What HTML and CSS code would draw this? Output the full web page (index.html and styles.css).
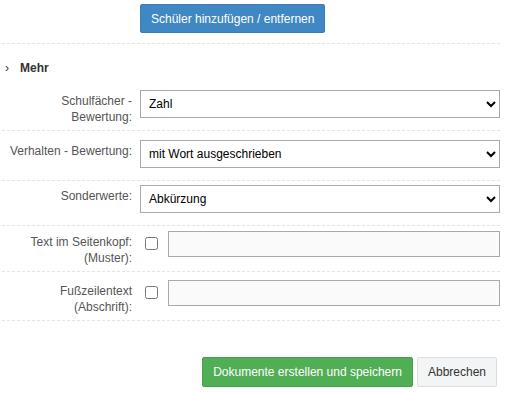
FILE: index.html
```html
<html>
    <head>
        <title>Dokumente</title>
        <link rel="stylesheet" href="styles.css">
    </head>
    <body>
        <div class="page">
            <div class="row top-row">
                <div class="label"></div>
                <div class="control">
                    <button class="btn btn-primary">Schüler hinzufügen / entfernen</button>
                </div>
            </div>

            <div class="more"><span class="chev">&rsaquo;</span>Mehr</div>

            <div class="row first">
                <div class="label">Schulfächer -<br>Bewertung:</div>
                <div class="control">
                    <select class="sel">
                        <option>Zahl</option>
                    </select>
                </div>
            </div>

            <div class="row pad-9">
                <div class="label">Verhalten - Bewertung:</div>
                <div class="control">
                    <select class="sel">
                        <option>mit Wort ausgeschrieben</option>
                    </select>
                </div>
            </div>

            <div class="row pad-4">
                <div class="label">Sonderwerte:</div>
                <div class="control">
                    <select class="sel">
                        <option>Abkürzung</option>
                    </select>
                </div>
            </div>

            <div class="row pad-5">
                <div class="label">Text im Seitenkopf:<br>(Muster):</div>
                <div class="control">
                    <input type="checkbox" class="chk">
                    <input type="text" class="txt" disabled>
                </div>
            </div>

            <div class="row pad-8">
                <div class="label">Fußzeilentext<br>(Abschrift):</div>
                <div class="control">
                    <input type="checkbox" class="chk">
                    <input type="text" class="txt" disabled>
                </div>
            </div>

            <div class="actions">
                <button class="btn btn-success">Dokumente erstellen und speichern</button>
                <button class="btn btn-default">Abbrechen</button>
            </div>
        </div>
    </body>
</html>
```

FILE: styles.css
```css
body {
    margin: 0;
    font-family: "Liberation Sans", Arial, sans-serif;
    font-size: 12px;
    color: #333;
    background: #fff;
}

.page {
    width: 498px;
    padding: 0 5px 0 2px;
}

.row {
    display: flex;
    align-items: flex-start;
    border-bottom: 1px dashed #e4e4e4;
    padding: 9px 0 5px 0;
}

.row.top-row {
    padding: 4px 0 10px 0;
}

.row.first {
    padding-top: 0;
}

.row.pad-9 {
    padding-top: 9px;
}

.row.pad-4 {
    padding-top: 4px;
}

.row.pad-5 {
    padding-top: 5px;
}

.row.pad-8 {
    padding-top: 8px;
}

.label {
    width: 130px;
    flex: none;
    text-align: right;
    color: #555;
    line-height: 16px;
    padding-top: 3px;
}

.control {
    flex: 1;
    display: flex;
    align-items: flex-start;
    margin-left: 8px;
    padding-bottom: 7px;
}

.top-row .control {
    padding-bottom: 0;
}

.more {
    font-weight: bold;
    padding: 16px 0 14px 3px;
    line-height: 16px;
}

.chev {
    font-weight: normal;
    display: inline-block;
    width: 15px;
}

.sel {
    width: 100%;
    height: 28px;
    border: 1px solid #aaa;
    background: #fff;
    font-family: "Liberation Sans", Arial, sans-serif;
    font-size: 12px;
    color: #000;
    padding: 0 4px;
}

.chk {
    margin: 6px 10px 0 5px;
    width: 13px;
    height: 13px;
}

.txt {
    flex: 1;
    height: 26px;
    border: 1px solid #aaa;
    background: #fafafa;
    box-sizing: border-box;
}

.btn {
    font-family: "Liberation Sans", Arial, sans-serif;
    font-size: 12px;
    border-radius: 2px;
    padding: 0 10px;
    height: 30px;
    cursor: pointer;
}

.btn-primary {
    background: #3f88c4;
    border: 1px solid #3a7fb8;
    color: #fff;
    height: 29px;
}

.btn-success {
    background: #50ae54;
    border: 1px solid #48a04c;
    color: #fff;
}

.btn-default {
    background: #f3f4f6;
    border: 1px solid #ddd;
    color: #333;
}

.actions {
    display: flex;
    justify-content: flex-end;
    gap: 4px;
    padding: 36px 3px 0 0;
}
```
